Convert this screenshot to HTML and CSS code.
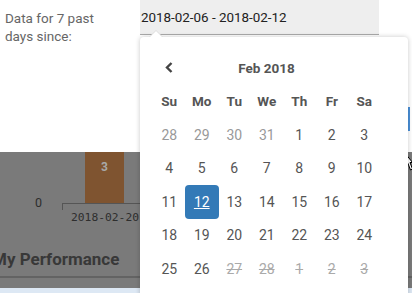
FILE: index.html
```html
<!DOCTYPE html>
<html lang="en">
<head>
    <meta charset="UTF-8">
    <meta name="viewport" content="width=device-width, initial-scale=1.0">
    <title>My Performance</title>
    <link rel="stylesheet" href="styles.css">
</head>
<body>

    <div class="filter">
        <div class="filter-label">Data for 7 past days since:</div>
        <div class="range-input">2018-02-06 - 2018-02-12</div>
    </div>

    <div class="blank">
        <span class="focus-edge"></span>
    </div>

    <div class="chart">
        <div class="plot">
            <div class="y-tick">0</div>
            <div class="bar">3</div>
        </div>
        <div class="x-axis"></div>
        <div class="x-label">2018-02-20</div>
        <h2 class="section-title">My Performance</h2>
    </div>
    <div class="footer-strip"></div>

    <svg class="cursor" width="9" height="19" viewBox="0 0 9 19">
        <path d="M0.5 0.5 L0.5 15 L4 11.5 L6.5 18 L8.5 17 L6 10.5 L8.5 10.5 Z" fill="#fff" stroke="#000" stroke-width="1"/>
    </svg>

    <div class="picker">
        <div class="picker-head">
            <span class="prev">
                <svg width="8" height="11" viewBox="0 0 8 11">
                    <path d="M6.5 1 L2 5.5 L6.5 10" fill="none" stroke="#444" stroke-width="2.4"/>
                </svg>
            </span>
            <span class="month">Feb 2018</span>
            <span class="next"></span>
        </div>
        <div class="days" id="days">
            <div class="dow">Su</div>
            <div class="dow">Mo</div>
            <div class="dow">Tu</div>
            <div class="dow">We</div>
            <div class="dow">Th</div>
            <div class="dow">Fr</div>
            <div class="dow">Sa</div>
        </div>
    </div>

    <script>
        // Feb 2018 grid: 28 Jan .. 3 Mar
        let days = document.getElementById("days");
        let cells = [];
        [28, 29, 30, 31].forEach(d => cells.push({ d: d, cls: "old" }));
        for (let d = 1; d <= 28; d++) {
            let cls = "";
            if (d == 12) cls = "active";
            if (d >= 27) cls = "disabled";
            cells.push({ d: d, cls: cls });
        }
        [1, 2, 3].forEach(d => cells.push({ d: d, cls: "disabled" }));

        cells.forEach(c => {
            let div = document.createElement("div");
            div.className = "day " + c.cls;
            div.textContent = c.d;
            days.appendChild(div);
        });
    </script>

</body>
</html>
```

FILE: styles.css
```css
body {
    margin: 0;
    font-family: Roboto, "Liberation Sans", sans-serif;
    position: relative;
    height: 293px;
    overflow: hidden;
    background: #fff;
}
.filter {
    display: flex;
    height: 36px;
}
.filter-label {
    width: 100px;
    padding: 9px 35px 0 5px;
    font-size: 13.5px;
    line-height: 18px;
    color: #666;
}
.range-input {
    width: 239px;
    height: 35px;
    box-sizing: border-box;
    background: #eee;
    border-bottom: 1px solid #aaa;
    padding: 10px 1px 0;
    font-size: 13.4px;
    color: #222;
}
.blank {
    height: 116px;
    display: flex;
    justify-content: flex-end;
    align-items: flex-start;
}
.focus-edge {
    width: 2px;
    height: 24px;
    margin-top: 71px;
    margin-right: 2px;
    background: #4a90d9;
}
.chart {
    height: 136px;
    background: #7a7a7a;
    overflow: hidden;
}
.plot {
    display: flex;
    align-items: flex-end;
    height: 51px;
}
.y-tick {
    width: 42px;
    padding-right: 20px;
    text-align: right;
    font-size: 12.5px;
    color: #2e2e2e;
    line-height: 14px;
    margin-bottom: -7px;
}
.bar {
    margin-left: 23px;
    width: 39px;
    height: 51px;
    box-sizing: border-box;
    padding-top: 8px;
    background: #7f5430;
    color: #a8a8a8;
    font-size: 12px;
    font-weight: bold;
    text-align: center;
}
.x-axis {
    margin-left: 62px;
    width: 78px;
    height: 6px;
    border-top: 1px solid #555;
    border-left: 1px solid #555;
}
.x-label {
    margin-left: 71px;
    margin-top: 1px;
    font-family: "DejaVu Sans Mono", monospace;
    font-size: 11.3px;
    color: #2e2e2e;
}
.section-title {
    margin: 25px 0 0 -8px;
    padding-bottom: 7px;
    border-bottom: 2px solid #636363;
    font-size: 17px;
    color: #383838;
}
.footer-strip {
    height: 6px;
    background: #dde8f4;
}
.cursor {
    position: absolute;
    left: 404px;
    top: 152px;
}
.picker {
    position: absolute;
    left: 140px;
    top: 37px;
    width: 268px;
    height: 270px;
    box-sizing: border-box;
    padding: 14px 28px 0 13px;
    background: #fff;
    border-radius: 4px;
    box-shadow: 0 0 5px rgba(0, 0, 0, 0.22);
}
.picker::before {
    content: "";
    position: absolute;
    left: 9px;
    top: -7px;
    border-left: 7px solid transparent;
    border-right: 7px solid transparent;
    border-bottom: 7px solid #ddd;
}
.picker::after {
    content: "";
    position: absolute;
    left: 10px;
    top: -6px;
    border-left: 6px solid transparent;
    border-right: 6px solid transparent;
    border-bottom: 6px solid #fff;
}
.picker-head {
    display: grid;
    grid-template-columns: 32.5px 1fr 32.5px;
    height: 33.5px;
    align-items: center;
    text-align: center;
}
.prev svg {
    display: block;
    margin: 0 auto;
}
.month {
    font-weight: bold;
    font-size: 13.5px;
    color: #555;
}
.days {
    display: grid;
    grid-template-columns: repeat(7, 32.5px);
    grid-auto-rows: 33.5px;
}
.dow, .day {
    display: flex;
    align-items: center;
    justify-content: center;
    font-size: 14px;
    color: #555;
}
.dow {
    font-weight: bold;
    font-size: 13.5px;
}
.day.old {
    color: #999;
}
.day.disabled {
    color: #aaa;
    text-decoration: line-through;
}
.day.active {
    background: #337ab7;
    color: #fff;
    border-radius: 4px;
    text-decoration: underline;
    margin: 0 -1px;
}
```
